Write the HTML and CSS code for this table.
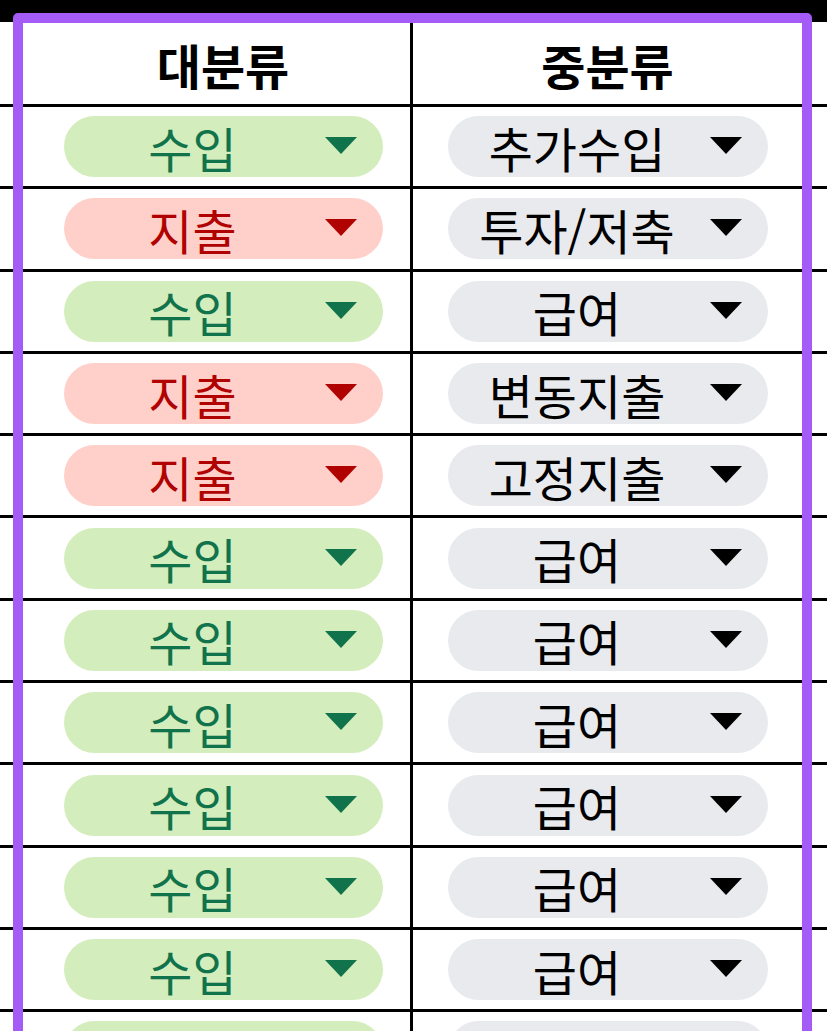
FILE: index.html
```html
<!DOCTYPE html>
<html lang="ko">
<head>
<meta charset="utf-8">
<title>분류</title>
<link rel="stylesheet" href="styles.css">
</head>
<body>
<div class="topbar"></div>
<div class="sheet">
  <div class="row head">
    <div class="gutter"></div>
    <div class="cell c1">대분류</div>
    <div class="cell c2">중분류</div>
    <div class="gutter"></div>
  </div>

  <div class="row">
    <div class="gutter"></div>
    <div class="cell c1"><span class="chip green"><span class="label">수입</span><svg class="arrow" viewBox="0 0 32 17"><path d="M0 0H32L16 17Z"/></svg></span></div>
    <div class="cell c2"><span class="chip gray"><span class="label">추가수입</span><svg class="arrow" viewBox="0 0 32 17"><path d="M0 0H32L16 17Z"/></svg></span></div>
    <div class="gutter"></div>
  </div>
  <div class="row">
    <div class="gutter"></div>
    <div class="cell c1"><span class="chip red"><span class="label">지출</span><svg class="arrow" viewBox="0 0 32 17"><path d="M0 0H32L16 17Z"/></svg></span></div>
    <div class="cell c2"><span class="chip gray"><span class="label">투자/저축</span><svg class="arrow" viewBox="0 0 32 17"><path d="M0 0H32L16 17Z"/></svg></span></div>
    <div class="gutter"></div>
  </div>
  <div class="row">
    <div class="gutter"></div>
    <div class="cell c1"><span class="chip green"><span class="label">수입</span><svg class="arrow" viewBox="0 0 32 17"><path d="M0 0H32L16 17Z"/></svg></span></div>
    <div class="cell c2"><span class="chip gray"><span class="label">급여</span><svg class="arrow" viewBox="0 0 32 17"><path d="M0 0H32L16 17Z"/></svg></span></div>
    <div class="gutter"></div>
  </div>
  <div class="row">
    <div class="gutter"></div>
    <div class="cell c1"><span class="chip red"><span class="label">지출</span><svg class="arrow" viewBox="0 0 32 17"><path d="M0 0H32L16 17Z"/></svg></span></div>
    <div class="cell c2"><span class="chip gray"><span class="label">변동지출</span><svg class="arrow" viewBox="0 0 32 17"><path d="M0 0H32L16 17Z"/></svg></span></div>
    <div class="gutter"></div>
  </div>
  <div class="row">
    <div class="gutter"></div>
    <div class="cell c1"><span class="chip red"><span class="label">지출</span><svg class="arrow" viewBox="0 0 32 17"><path d="M0 0H32L16 17Z"/></svg></span></div>
    <div class="cell c2"><span class="chip gray"><span class="label">고정지출</span><svg class="arrow" viewBox="0 0 32 17"><path d="M0 0H32L16 17Z"/></svg></span></div>
    <div class="gutter"></div>
  </div>
  <div class="row">
    <div class="gutter"></div>
    <div class="cell c1"><span class="chip green"><span class="label">수입</span><svg class="arrow" viewBox="0 0 32 17"><path d="M0 0H32L16 17Z"/></svg></span></div>
    <div class="cell c2"><span class="chip gray"><span class="label">급여</span><svg class="arrow" viewBox="0 0 32 17"><path d="M0 0H32L16 17Z"/></svg></span></div>
    <div class="gutter"></div>
  </div>
  <div class="row">
    <div class="gutter"></div>
    <div class="cell c1"><span class="chip green"><span class="label">수입</span><svg class="arrow" viewBox="0 0 32 17"><path d="M0 0H32L16 17Z"/></svg></span></div>
    <div class="cell c2"><span class="chip gray"><span class="label">급여</span><svg class="arrow" viewBox="0 0 32 17"><path d="M0 0H32L16 17Z"/></svg></span></div>
    <div class="gutter"></div>
  </div>
  <div class="row">
    <div class="gutter"></div>
    <div class="cell c1"><span class="chip green"><span class="label">수입</span><svg class="arrow" viewBox="0 0 32 17"><path d="M0 0H32L16 17Z"/></svg></span></div>
    <div class="cell c2"><span class="chip gray"><span class="label">급여</span><svg class="arrow" viewBox="0 0 32 17"><path d="M0 0H32L16 17Z"/></svg></span></div>
    <div class="gutter"></div>
  </div>
  <div class="row">
    <div class="gutter"></div>
    <div class="cell c1"><span class="chip green"><span class="label">수입</span><svg class="arrow" viewBox="0 0 32 17"><path d="M0 0H32L16 17Z"/></svg></span></div>
    <div class="cell c2"><span class="chip gray"><span class="label">급여</span><svg class="arrow" viewBox="0 0 32 17"><path d="M0 0H32L16 17Z"/></svg></span></div>
    <div class="gutter"></div>
  </div>
  <div class="row">
    <div class="gutter"></div>
    <div class="cell c1"><span class="chip green"><span class="label">수입</span><svg class="arrow" viewBox="0 0 32 17"><path d="M0 0H32L16 17Z"/></svg></span></div>
    <div class="cell c2"><span class="chip gray"><span class="label">급여</span><svg class="arrow" viewBox="0 0 32 17"><path d="M0 0H32L16 17Z"/></svg></span></div>
    <div class="gutter"></div>
  </div>
  <div class="row">
    <div class="gutter"></div>
    <div class="cell c1"><span class="chip green"><span class="label">수입</span><svg class="arrow" viewBox="0 0 32 17"><path d="M0 0H32L16 17Z"/></svg></span></div>
    <div class="cell c2"><span class="chip gray"><span class="label">급여</span><svg class="arrow" viewBox="0 0 32 17"><path d="M0 0H32L16 17Z"/></svg></span></div>
    <div class="gutter"></div>
  </div>
  <div class="row">
    <div class="gutter"></div>
    <div class="cell c1"><span class="chip green"><span class="label">수입</span><svg class="arrow" viewBox="0 0 32 17"><path d="M0 0H32L16 17Z"/></svg></span></div>
    <div class="cell c2"><span class="chip gray"><span class="label">급여</span><svg class="arrow" viewBox="0 0 32 17"><path d="M0 0H32L16 17Z"/></svg></span></div>
    <div class="gutter"></div>
  </div>
</div>
<div class="selection"></div>
</body>
</html>
```

FILE: styles.css
```css
html, body {
  margin: 0;
  padding: 0;
  background: #fff;
  overflow: hidden;
}

body {
  position: relative;
  width: 827px;
  height: 1031px;
  font-family: "Noto Sans CJK KR", "Noto Sans", sans-serif;
  color: #000;
}

.topbar {
  height: 22px;
  background: #000;
}

.sheet {
  display: flex;
  flex-direction: column;
}

.row {
  display: grid;
  grid-template-columns: 36px 377px 389px 25px;
  height: 82.3px;
  flex: none;
  box-sizing: border-box;
  border-bottom: 3px solid #000;
}

.row.head {
  height: 85px;
}

.cell {
  display: flex;
  align-items: center;
  justify-content: center;
  box-sizing: border-box;
}

.c1 {
  border-right: 3px solid #000;
}

.head .cell {
  font-size: 48px;
  font-weight: 700;
  line-height: 1;
  padding-top: 2px;
}

.chip {
  display: flex;
  align-items: center;
  height: 61px;
  border-radius: 31px;
  padding-right: 26px;
  box-sizing: border-box;
}

.c1 .chip {
  width: 319px;
}

.c2 .chip {
  width: 320px;
}

.label {
  flex: 1;
  text-align: center;
  font-size: 48px;
  line-height: 1;
  white-space: nowrap;
}

.arrow {
  width: 32px;
  height: 17px;
  margin-left: 3px;
  margin-top: -2px;
  flex: none;
}

.green {
  background: #d4edbc;
  color: #11734b;
}
.green .arrow { fill: #11734b; }

.red {
  background: #ffcfc9;
  color: #b10202;
}
.red .arrow { fill: #b10202; }

.gray {
  background: #e8eaed;
  color: #000;
}
.gray .arrow { fill: #000; }

.selection {
  position: absolute;
  left: 13px;
  top: 13px;
  width: 799px;
  height: 1100px;
  box-sizing: border-box;
  border: 10px solid #a55cf6;
  border-radius: 5px;
  pointer-events: none;
}
```
